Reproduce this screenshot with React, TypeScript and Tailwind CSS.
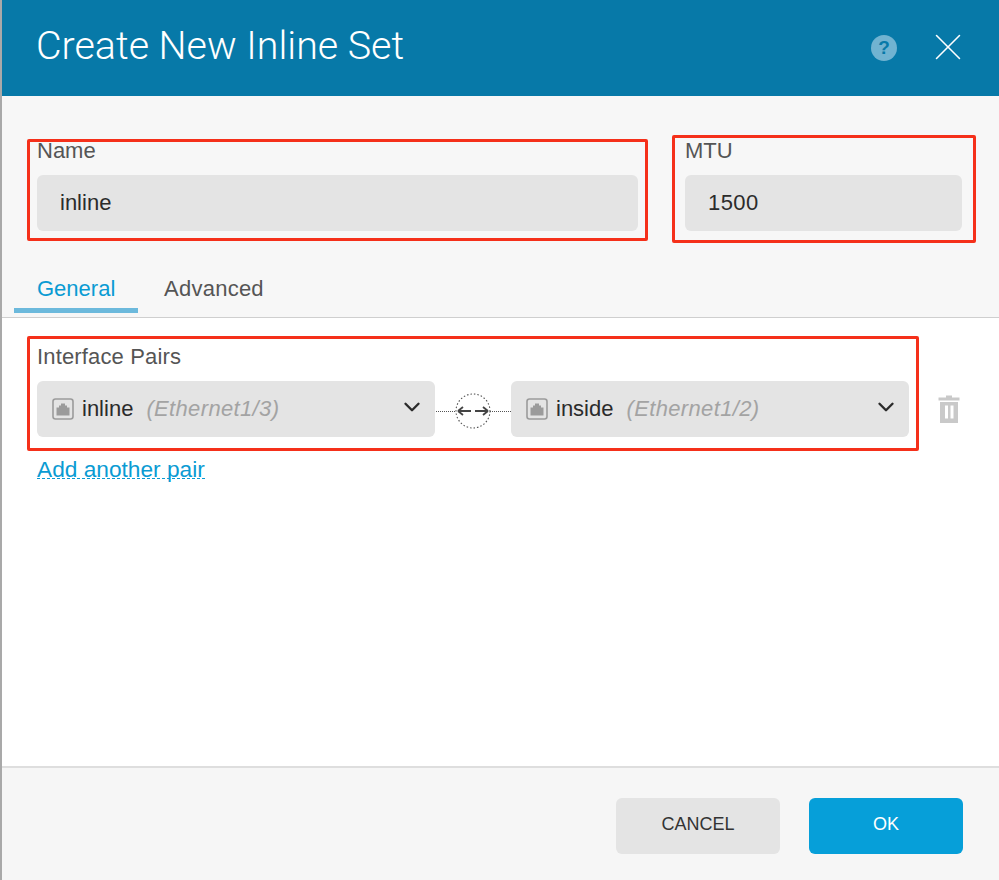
import React from "react";
import { ChevronDown, X } from "lucide-react";

function PortIcon() {
  return (
    <svg width="22" height="22" viewBox="0 0 22 22" className="shrink-0">
      <rect x="1" y="1" width="20" height="20" rx="2.5" fill="#e4e4e4" stroke="#9b9b9b" strokeWidth="1.6" />
      <path d="M4.5 17.5V9.5H7V7.5H9V5.5H13V7.5H15V9.5H17.5V17.5Z" fill="#9b9b9b" />
    </svg>
  );
}

function PairSelect({ name, iface }: { name: string; iface: string }) {
  return (
    <div className="flex h-14 w-[398px] items-center rounded-md bg-[#e4e4e4] pl-[15px] pr-[10px]">
      <PortIcon />
      <span className="ml-2 mb-[2px] text-[22px] text-[#2b2b2b]">{name}</span>
      <span className="ml-[13px] mb-[2px] text-[22px] italic tracking-[0.35px] text-[#a3a3a3]">{iface}</span>
      <ChevronDown size={26} strokeWidth={2.2} className="ml-auto mb-1 text-[#2b2b2b]" />
    </div>
  );
}

function Connector() {
  return (
    <div className="relative flex h-14 w-[76px] items-center justify-center">
      <div className="absolute left-[1px] right-0 top-[30px] border-t border-dotted border-[#555]" />
      <svg width="36" height="36" viewBox="0 0 36 36" className="relative mt-[4px]">
        <circle cx="18" cy="18" r="17" fill="#fff" stroke="#555" strokeWidth="1.1" strokeDasharray="1.5 2" />
        <path d="M3 18H16M3 18L8 14M3 18L8 22M20 18H33M33 18L28 14M33 18L28 22" fill="none" stroke="#444" strokeWidth="1.8" />
      </svg>
    </div>
  );
}

function TrashIcon() {
  return (
    <svg width="22" height="28" viewBox="0 0 22 28">
      <path d="M8 0.5H14V2.5H21.5V5.5H0.5V2.5H8Z" fill="#c9c9c9" />
      <path fillRule="evenodd" d="M2 7H20V28H2ZM7 10.5V23.5H10V10.5ZM12.5 10.5V23.5H15.5V10.5Z" fill="#c9c9c9" />
    </svg>
  );
}

export default function App() {
  return (
    <div
      className="relative flex h-[880px] w-[999px] flex-col overflow-hidden border-l-2 border-[#a9a9a9] bg-white"
      style={{ fontFamily: '"Liberation Sans", Arial, sans-serif' }}
    >
      {/* Header */}
      <div className="flex h-24 shrink-0 items-center bg-[#0779a8] pl-[34px] pr-[28px]">
        <h1 className="mb-[4px] text-[39.4px] text-white" style={{ fontFamily: 'Roboto, sans-serif', fontWeight: 300 }}>
          Create New Inline Set
        </h1>
        <div className="ml-auto flex items-center gap-[28px]">
          <span className="flex h-[26px] w-[26px] items-center justify-center rounded-full bg-[#71b3d1] text-[19px] font-bold text-[#0779a8]">
            ?
          </span>
          <X size={46} strokeWidth={0.8} className="mb-[2px] text-white" />
        </div>
      </div>

      {/* Name + MTU */}
      <div className="h-[222px] shrink-0 border-b border-[#cfcfcf] bg-[#f7f7f7]">
        <div className="flex gap-[47px] pl-[35px] pt-[43px]">
          <div className="w-[601px]">
            <label className="block text-[22px] leading-[24px] text-[#555]">Name</label>
            <div className="mt-[12px] flex h-14 items-center rounded-md bg-[#e4e4e4] pb-[2px] pl-[23px] text-[22px] text-[#2b2b2b]">inline</div>
          </div>
          <div className="w-[277px]">
            <label className="block text-[22px] leading-[24px] text-[#555]">MTU</label>
            <div className="mt-[12px] flex h-14 items-center rounded-md bg-[#e4e4e4] pb-[2px] pl-[23px] text-[22px] tracking-[0.4px] text-[#2b2b2b]">1500</div>
          </div>
        </div>
        {/* Tabs */}
        <div className="mt-[25px] flex pl-[12px]">
          <div className="h-[57px] w-[124px] border-b-[5px] border-[#6cb9dc] pl-[23px] pt-[21px] text-[22px] leading-[24px] text-[#0a9bd3]">General</div>
          <div className="pl-[26px] pt-[21px] text-[22px] tracking-[0.25px] leading-[24px] text-[#555]">Advanced</div>
        </div>
      </div>

      {/* Interface pairs */}
      <div className="flex-1 pl-[35px] pt-[27px]">
        <label className="block text-[22px] leading-[24px] tracking-[0.15px] text-[#555]">Interface Pairs</label>
        <div className="mt-[12px] flex items-center">
          <PairSelect name="inline" iface="(Ethernet1/3)" />
          <Connector />
          <PairSelect name="inside" iface="(Ethernet1/2)" />
          <div className="ml-[29px]"><TrashIcon /></div>
        </div>
        <a className="mt-[23px] inline-block border-b border-dashed border-[#0a9bd3] text-[22.7px] leading-[18px] text-[#0a9bd3]">Add another pair</a>
      </div>

      {/* Footer */}
      <div className="flex h-[114px] shrink-0 items-start justify-end gap-[29px] border-t-2 border-[#dedede] bg-[#f6f6f6] pr-[36px] pt-[30px]">
        <button className="h-14 w-[164px] rounded-md bg-[#e4e4e4] pb-1 text-[18px] text-[#333]">CANCEL</button>
        <button className="h-14 w-[154px] rounded-md bg-[#069fd9] pb-[3px] text-[18px] text-white">OK</button>
      </div>

      {/* Red annotation boxes */}
      <div className="pointer-events-none absolute left-[25px] top-[139px] h-[102px] w-[621px] rounded-[2px] border-[3px] border-[#f5301a]" />
      <div className="pointer-events-none absolute left-[670px] top-[135px] h-[108px] w-[304px] rounded-[2px] border-[3px] border-[#f5301a]" />
      <div className="pointer-events-none absolute left-[25px] top-[336px] h-[115px] w-[892px] rounded-[2px] border-[3px] border-[#f5301a]" />
    </div>
  );
}
